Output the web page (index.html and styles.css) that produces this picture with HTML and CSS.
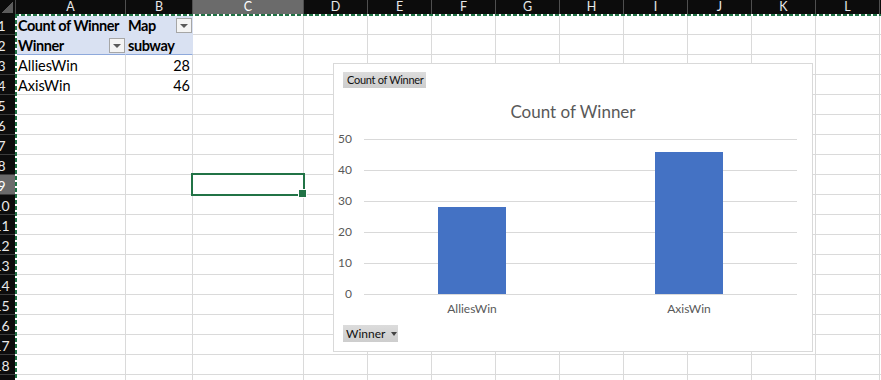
FILE: index.html
```html
<!DOCTYPE html>
<html>

<head>
    <meta charset="utf-8">
    <title>Pivot - Count of Winner</title>
    <link rel="stylesheet" href="styles.css">
</head>

<body>
    <div class="sheet">
        <div class="grid">
            <!-- column headers -->
            <div class="corner"></div>
            <div class="ch">A</div>
            <div class="ch">B</div>
            <div class="ch sel">C</div>
            <div class="ch">D</div>
            <div class="ch">E</div>
            <div class="ch">F</div>
            <div class="ch">G</div>
            <div class="ch">H</div>
            <div class="ch">I</div>
            <div class="ch">J</div>
            <div class="ch">K</div>
            <div class="ch">L</div>
            <div class="ch">M</div>

            <!-- pivot table -->
            <div class="rh">1</div>
            <div class="c ph">Count of Winner</div>
            <div class="c ph">Map<span class="dd"></span></div>
            <div class="c"></div><div class="c"></div><div class="c"></div><div class="c"></div><div class="c"></div><div class="c"></div><div class="c"></div><div class="c"></div><div class="c"></div><div class="c"></div><div class="c"></div>

            <div class="rh">2</div>
            <div class="c ph ph-last">Winner<span class="dd"></span></div>
            <div class="c ph ph-last">subway</div>
            <div class="c"></div><div class="c"></div><div class="c"></div><div class="c"></div><div class="c"></div><div class="c"></div><div class="c"></div><div class="c"></div><div class="c"></div><div class="c"></div><div class="c"></div>

            <div class="rh">3</div>
            <div class="c">AlliesWin</div>
            <div class="c num">28</div>
            <div class="c"></div><div class="c"></div><div class="c"></div><div class="c"></div><div class="c"></div><div class="c"></div><div class="c"></div><div class="c"></div><div class="c"></div><div class="c"></div><div class="c"></div>

            <div class="rh">4</div>
            <div class="c">AxisWin</div>
            <div class="c num">46</div>
            <div class="c"></div><div class="c"></div><div class="c"></div><div class="c"></div><div class="c"></div><div class="c"></div><div class="c"></div><div class="c"></div><div class="c"></div><div class="c"></div><div class="c"></div>

            <!-- empty rows -->
            <div class="rh">5</div>
            <div class="c"></div><div class="c"></div><div class="c"></div><div class="c"></div><div class="c"></div><div class="c"></div><div class="c"></div><div class="c"></div><div class="c"></div><div class="c"></div><div class="c"></div><div class="c"></div><div class="c"></div>
            <div class="rh">6</div>
            <div class="c"></div><div class="c"></div><div class="c"></div><div class="c"></div><div class="c"></div><div class="c"></div><div class="c"></div><div class="c"></div><div class="c"></div><div class="c"></div><div class="c"></div><div class="c"></div><div class="c"></div>
            <div class="rh">7</div>
            <div class="c"></div><div class="c"></div><div class="c"></div><div class="c"></div><div class="c"></div><div class="c"></div><div class="c"></div><div class="c"></div><div class="c"></div><div class="c"></div><div class="c"></div><div class="c"></div><div class="c"></div>
            <div class="rh">8</div>
            <div class="c"></div><div class="c"></div><div class="c"></div><div class="c"></div><div class="c"></div><div class="c"></div><div class="c"></div><div class="c"></div><div class="c"></div><div class="c"></div><div class="c"></div><div class="c"></div><div class="c"></div>
            <div class="rh sel">9</div>
            <div class="c"></div><div class="c"></div><div class="c"></div><div class="c"></div><div class="c"></div><div class="c"></div><div class="c"></div><div class="c"></div><div class="c"></div><div class="c"></div><div class="c"></div><div class="c"></div><div class="c"></div>
            <div class="rh">10</div>
            <div class="c"></div><div class="c"></div><div class="c"></div><div class="c"></div><div class="c"></div><div class="c"></div><div class="c"></div><div class="c"></div><div class="c"></div><div class="c"></div><div class="c"></div><div class="c"></div><div class="c"></div>
            <div class="rh">11</div>
            <div class="c"></div><div class="c"></div><div class="c"></div><div class="c"></div><div class="c"></div><div class="c"></div><div class="c"></div><div class="c"></div><div class="c"></div><div class="c"></div><div class="c"></div><div class="c"></div><div class="c"></div>
            <div class="rh">12</div>
            <div class="c"></div><div class="c"></div><div class="c"></div><div class="c"></div><div class="c"></div><div class="c"></div><div class="c"></div><div class="c"></div><div class="c"></div><div class="c"></div><div class="c"></div><div class="c"></div><div class="c"></div>
            <div class="rh">13</div>
            <div class="c"></div><div class="c"></div><div class="c"></div><div class="c"></div><div class="c"></div><div class="c"></div><div class="c"></div><div class="c"></div><div class="c"></div><div class="c"></div><div class="c"></div><div class="c"></div><div class="c"></div>
            <div class="rh">14</div>
            <div class="c"></div><div class="c"></div><div class="c"></div><div class="c"></div><div class="c"></div><div class="c"></div><div class="c"></div><div class="c"></div><div class="c"></div><div class="c"></div><div class="c"></div><div class="c"></div><div class="c"></div>
            <div class="rh">15</div>
            <div class="c"></div><div class="c"></div><div class="c"></div><div class="c"></div><div class="c"></div><div class="c"></div><div class="c"></div><div class="c"></div><div class="c"></div><div class="c"></div><div class="c"></div><div class="c"></div><div class="c"></div>
            <div class="rh">16</div>
            <div class="c"></div><div class="c"></div><div class="c"></div><div class="c"></div><div class="c"></div><div class="c"></div><div class="c"></div><div class="c"></div><div class="c"></div><div class="c"></div><div class="c"></div><div class="c"></div><div class="c"></div>
            <div class="rh">17</div>
            <div class="c"></div><div class="c"></div><div class="c"></div><div class="c"></div><div class="c"></div><div class="c"></div><div class="c"></div><div class="c"></div><div class="c"></div><div class="c"></div><div class="c"></div><div class="c"></div><div class="c"></div>
            <div class="rh">18</div>
            <div class="c"></div><div class="c"></div><div class="c"></div><div class="c"></div><div class="c"></div><div class="c"></div><div class="c"></div><div class="c"></div><div class="c"></div><div class="c"></div><div class="c"></div><div class="c"></div><div class="c"></div>
            <div class="rh">19</div>
            <div class="c"></div><div class="c"></div><div class="c"></div><div class="c"></div><div class="c"></div><div class="c"></div><div class="c"></div><div class="c"></div><div class="c"></div><div class="c"></div><div class="c"></div><div class="c"></div><div class="c"></div>
        </div>

        <!-- copy marquee + active cell, drawn over the grid -->
        <div class="marquee"></div>
        <div class="selection"></div>

        <!-- pivot chart floating over the sheet -->
        <div class="chart">
            <div class="field-btn">Count of Winner</div>
            <div class="chart-title">Count of Winner</div>
            <svg class="plot" width="478" height="198">
                <line class="gridline" x1="30" y1="17.5" x2="463" y2="17.5"/>
                <line class="gridline" x1="30" y1="48.5" x2="463" y2="48.5"/>
                <line class="gridline" x1="30" y1="79.5" x2="463" y2="79.5"/>
                <line class="gridline" x1="30" y1="110.5" x2="463" y2="110.5"/>
                <line class="gridline" x1="30" y1="141.5" x2="463" y2="141.5"/>
                <line class="gridline" x1="30" y1="172.5" x2="463" y2="172.5"/>

                <text class="tick" x="18" y="21">50</text>
                <text class="tick" x="18" y="52">40</text>
                <text class="tick" x="18" y="83">30</text>
                <text class="tick" x="18" y="114">20</text>
                <text class="tick" x="18" y="145">10</text>
                <text class="tick" x="18" y="176">0</text>

                <rect class="bar" x="104" y="85" width="68" height="87"/>
                <rect class="bar" x="321" y="30" width="68" height="142"/>

                <text class="cat" x="138" y="191">AlliesWin</text>
                <text class="cat" x="355" y="191">AxisWin</text>
            </svg>
            <div class="field-btn winner-btn">Winner<span class="arrow"></span></div>
        </div>
    </div>
</body>
</html>
```

FILE: styles.css
```css
* {
    box-sizing: border-box;
}

html,
body {
    margin: 0;
}

body {
    width: 881px;
    height: 380px;
    overflow: hidden;
    background: #ffffff;
    font-family: Lato, "Liberation Sans", sans-serif;
}

.sheet {
    position: relative;
    width: 881px;
    height: 380px;
    overflow: hidden;
}

/* the view is scrolled a little, so the row headers are cut on the left */
.grid {
    display: grid;
    grid-template-columns: 28px 110px 67px 111px repeat(10, 64px);
    grid-template-rows: 15px;
    grid-auto-rows: 20px;
    width: max-content;
    margin-left: -12px;
}

.corner {
    position: relative;
    background: #0c0c0c;
    border-right: 1px solid #4a4a4a;
}
.corner::after {
    content: "";
    position: absolute;
    right: 2px;
    bottom: 2px;
    width: 11px;
    height: 11px;
    background: linear-gradient(135deg, transparent 50%, #5c5c5c 50%);
}

.ch {
    background: #0c0c0c;
    color: #e8e8e8;
    border-right: 1px solid #4f4f4f;
    font-size: 12.5px;
    line-height: 13px;
    text-align: center;
}
.ch.sel {
    background: #6b6b6b;
    color: #ffffff;
}

.rh {
    display: flex;
    align-items: flex-end;
    justify-content: center;
    background: #0c0c0c;
    color: #e8e8e8;
    border-right: 1px solid #4a4a4a;
    border-bottom: 1px solid #3c3c3c;
    font-size: 14px;
    line-height: 17px;
    white-space: nowrap;
}
.rh.sel {
    background: #6b6b6b;
    color: #ffffff;
}

.c {
    display: flex;
    align-items: flex-end;
    padding: 0 2px;
    border-right: 1px solid #dadada;
    border-bottom: 1px solid #dadada;
    font-size: 14.5px;
    line-height: 17px;
    color: #000000;
    white-space: nowrap;
}
.c.num {
    justify-content: flex-end;
}

/* pivot header rows */
.c.ph {
    background: #d9e1f2;
    border-right-color: #d9e1f2;
    border-bottom-color: #d9e1f2;
    font-weight: bold;
    letter-spacing: -0.45px;
}
.c.ph-last {
    border-bottom-color: #8ea9db;
}

.dd {
    display: flex;
    align-items: center;
    justify-content: center;
    width: 16px;
    height: 15px;
    margin: 0 -2px 1px auto;
    border: 1px solid #a6a6a6;
    background: #f4f4f4;
}
.dd::before {
    content: "";
    border-left: 4px solid transparent;
    border-right: 4px solid transparent;
    border-top: 4px solid #5a5a5a;
}

.marquee {
    position: absolute;
    top: 14px;
    left: 15px;
    right: 0;
    bottom: 0;
    pointer-events: none;
    background:
        repeating-linear-gradient(90deg, #217346 0 4px, #ffffff 4px 6px) top left / 100% 2px no-repeat,
        repeating-linear-gradient(180deg, #217346 0 4px, #ffffff 4px 6px) top left / 2px 100% no-repeat;
}

.selection {
    position: absolute;
    left: 191px;
    top: 173px;
    width: 114px;
    height: 23px;
    border: 2px solid #217346;
}
.selection::after {
    content: "";
    position: absolute;
    right: -4px;
    bottom: -4px;
    width: 7px;
    height: 7px;
    background: #217346;
    border: 1px solid #ffffff;
}

/* chart */
.chart {
    position: absolute;
    left: 333px;
    top: 63px;
    width: 480px;
    height: 289px;
    display: flex;
    flex-direction: column;
    background: #ffffff;
    border: 1px solid #d9d9d9;
}

.field-btn {
    align-self: flex-start;
    height: 16px;
    margin: 8px 0 0 9px;
    padding: 0 3px 0 4px;
    background: linear-gradient(#dcdcdc, #cdcdcd);
    color: #111111;
    font-size: 11px;
    letter-spacing: -0.3px;
    line-height: 16px;
    white-space: nowrap;
}

.chart-title {
    margin-top: 13px;
    font-size: 17px;
    line-height: 21px;
    color: #595959;
    text-align: center;
}

.plot {
    display: block;
}

.gridline {
    stroke: #d9d9d9;
    stroke-width: 1;
}

.bar {
    fill: #4472c4;
}

.tick,
.cat {
    fill: #595959;
    font-family: Lato, "Liberation Sans", sans-serif;
    font-size: 12px;
}
.tick {
    text-anchor: end;
}
.cat {
    text-anchor: middle;
}

.winner-btn {
    display: flex;
    align-items: center;
    gap: 6px;
    width: 55px;
    height: 17px;
    margin-top: 5px;
    padding: 0 3px;
    font-size: 12px;
    letter-spacing: 0;
}
.arrow {
    border-left: 3.5px solid transparent;
    border-right: 3.5px solid transparent;
    border-top: 4px solid #444444;
}
```
